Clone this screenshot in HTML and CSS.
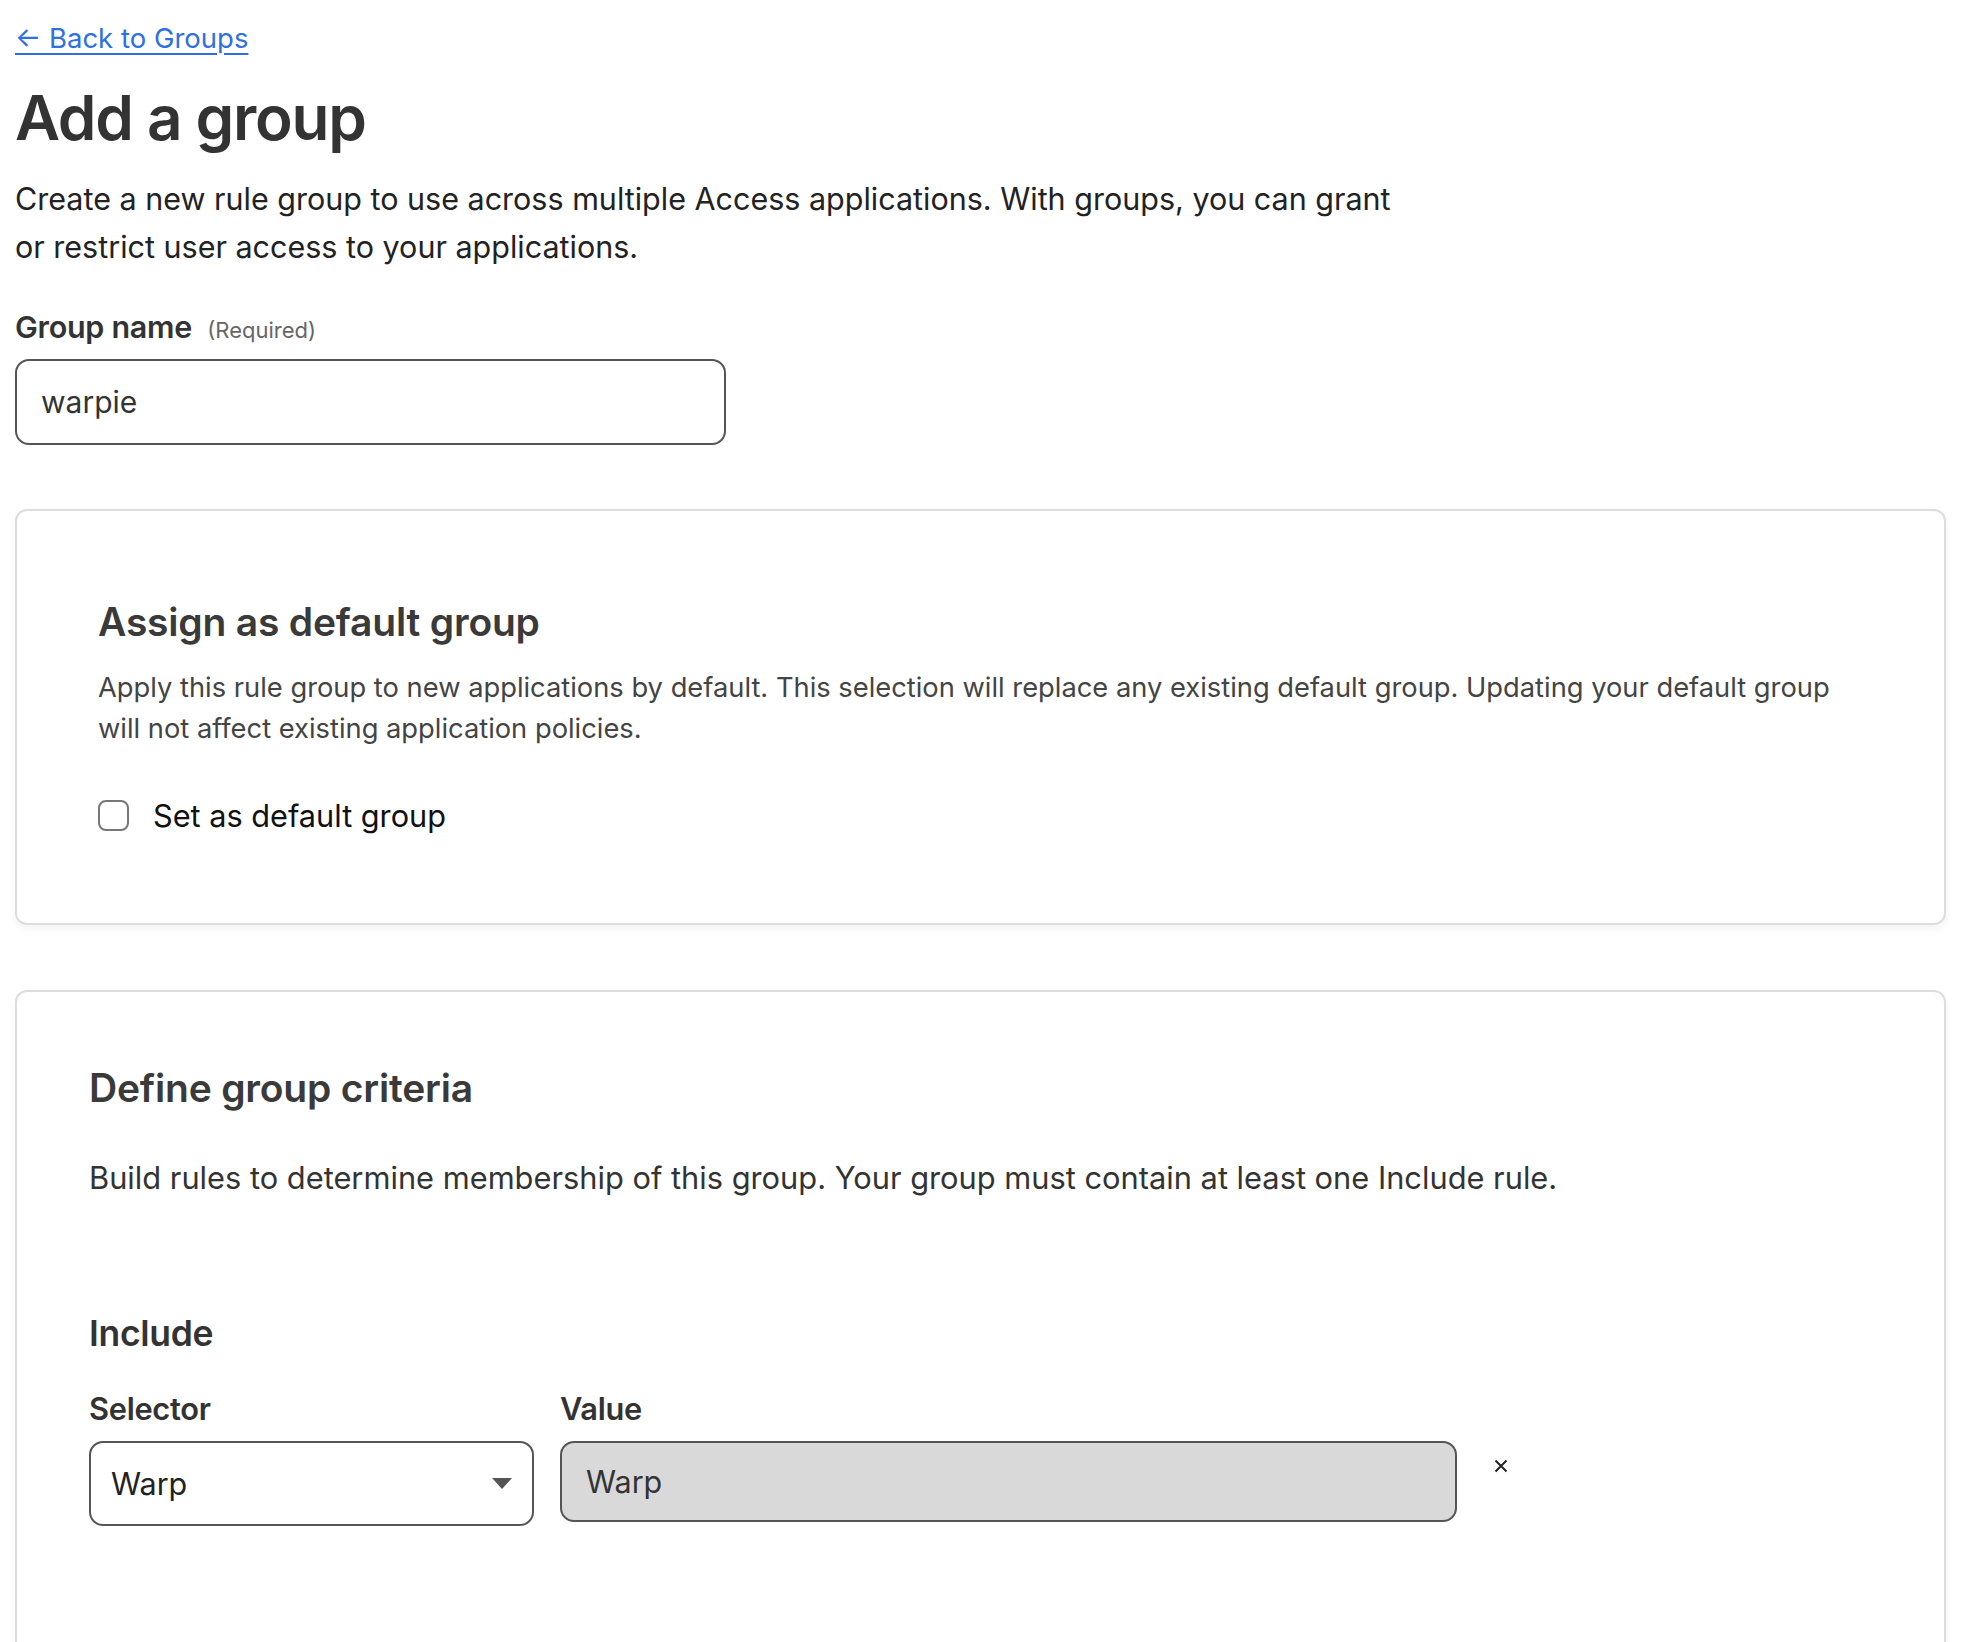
FILE: index.html
```html
<!DOCTYPE html>
<html lang="en">
<head>
<meta charset="utf-8">
<title>Add a group</title>
<link rel="stylesheet" href="styles.css">
</head>
<body>
<main class="page">
  <a class="back-link" href="#">← Back to Groups</a>
  <h1 class="title">Add a group</h1>
  <p class="intro">Create a new rule group to use across multiple Access applications. With groups, you can grant<br>or restrict user access to your applications.</p>

  <div class="field">
    <label class="field-label">Group name <span class="required">(Required)</span></label>
    <div class="text-input">warpie</div>
  </div>

  <section class="card card-default">
    <h2 class="card-title">Assign as default group</h2>
    <p class="card-text">Apply this rule group to new applications by default. This selection will replace any existing default group. Updating your default group<br>will not affect existing application policies.</p>
    <div class="check-row">
      <span class="checkbox"></span>
      <span class="check-label">Set as default group</span>
    </div>
  </section>

  <section class="card card-criteria">
    <h2 class="card-title">Define group criteria</h2>
    <p class="card-text criteria-text">Build rules to determine membership of this group. Your group must contain at least one Include rule.</p>
    <h3 class="rule-title">Include</h3>
    <div class="rule-row">
      <div class="rule-col col-selector">
        <div class="rule-label">Selector</div>
        <div class="select-box">
          <span>Warp</span>
          <svg class="caret" width="20" height="11" viewBox="0 0 20 11"><path d="M0 0 H20 L10 11 Z" fill="#555"/></svg>
        </div>
      </div>
      <div class="rule-col col-value">
        <div class="rule-label">Value</div>
        <div class="value-box">Warp</div>
      </div>
      <button class="remove" aria-label="Remove">
        <svg width="14" height="14" viewBox="0 0 14 14"><path d="M1.5 1.5 L12.5 12.5 M12.5 1.5 L1.5 12.5" stroke="#222" stroke-width="2" fill="none"/></svg>
      </button>
    </div>
  </section>
</main>
</body>
</html>
```

FILE: styles.css
```css
* { box-sizing: border-box; }
html, body { margin: 0; background: #ffffff; }
body {
  font-family: Inter, "Noto Sans", "Liberation Sans", sans-serif;
  color: #2b2b2b;
}
.page {
  padding: 23px 19px 0 15px;
}
.back-link {
  display: inline-block;
  font-size: 27.5px;
  line-height: 30px;
  color: #2f6fe0;
  text-decoration: underline;
  text-underline-offset: 5px;
  text-decoration-thickness: 2px;
}
.title {
  margin: 25px 0 0;
  font-size: 62px;
  line-height: 80px;
  font-weight: 600;
  color: #333333;
  letter-spacing: -1.3px;
}
.intro {
  margin: 17px 0 0;
  font-size: 30.5px;
  line-height: 48px;
  color: #222222;
}
.field { margin-top: 38px; }
.field-label {
  display: block;
  font-size: 30.5px;
  line-height: 36px;
  font-weight: 600;
  color: #333333;
  letter-spacing: -0.3px;
}
.required {
  font-size: 22px;
  font-weight: 400;
  color: #666666;
  margin-left: 8px;
  letter-spacing: 0;
}
.text-input {
  margin-top: 11px;
  width: 711px;
  height: 86px;
  border: 2px solid #555555;
  border-radius: 14px;
  padding: 0 24px;
  display: flex;
  align-items: center;
  font-size: 30px;
  color: #333333;
}
.card {
  background: #ffffff;
  border: 2px solid #dddddd;
  border-radius: 12px;
  box-shadow: 0 4px 10px rgba(0, 0, 0, 0.05);
}
.card-default {
  margin-top: 64px;
  padding: 87px 40px 90px 81px;
}
.card-criteria {
  margin-top: 65px;
  padding: 72px 40px 200px 72px;
}
.card-title {
  margin: 0;
  font-size: 39px;
  line-height: 48px;
  font-weight: 600;
  color: #3a3a3a;
  letter-spacing: -0.2px;
}
.card-text {
  margin: 21px 0 0;
  font-size: 27.3px;
  line-height: 41px;
  color: #444444;
}
.criteria-text {
  margin-top: 45px;
  font-size: 30.8px;
  color: #333333;
}
.check-row {
  margin-top: 48px;
  display: flex;
  align-items: center;
  height: 36px;
}
.checkbox {
  width: 31px;
  height: 31px;
  border: 2px solid #777777;
  border-radius: 8px;
  flex: none;
}
.check-label {
  margin-left: 24px;
  font-size: 30.7px;
  color: #111111;
}
.rule-title {
  margin: 116px 0 0;
  font-size: 35.5px;
  line-height: 40px;
  font-weight: 600;
  color: #333333;
  letter-spacing: -0.3px;
}
.rule-row {
  margin-top: 37px;
  display: flex;
  align-items: flex-start;
}
.rule-label {
  font-size: 30.8px;
  line-height: 36px;
  font-weight: 600;
  color: #333333;
  letter-spacing: -0.3px;
  margin-bottom: 14px;
}
.col-selector { width: 445px; }
.col-value { width: 897px; margin-left: 26px; }
.select-box {
  height: 85px;
  border: 2px solid #555555;
  border-radius: 14px;
  padding: 0 20px 0 20px;
  display: flex;
  align-items: center;
  justify-content: space-between;
  font-size: 30.5px;
  color: #222222;
}
.value-box {
  height: 81px;
  border: 2px solid #555555;
  border-radius: 14px;
  background: #d9d9d9;
  padding: 0 24px;
  display: flex;
  align-items: center;
  font-size: 30.5px;
  color: #333333;
}
.remove {
  margin: 68px 0 0 37px;
  padding: 0;
  border: none;
  background: transparent;
  width: 14px;
  height: 14px;
  display: flex;
}
```
